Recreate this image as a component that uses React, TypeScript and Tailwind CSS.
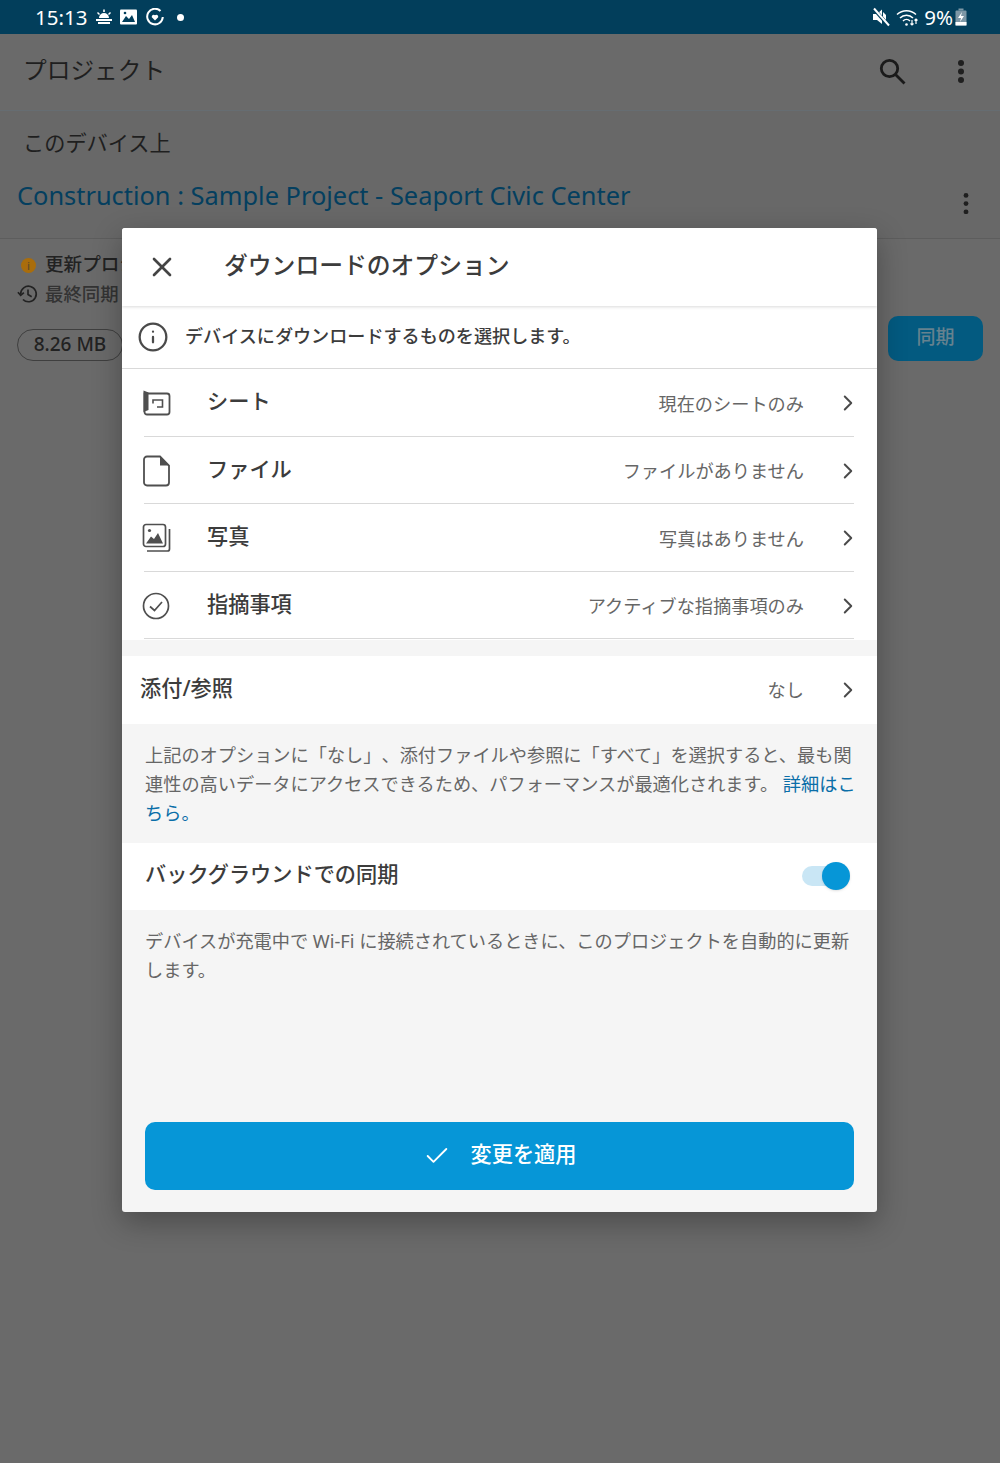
import { ChevronRight, Info, X, Check } from "lucide-react";
import type { ReactNode } from "react";

const font = { fontFamily: '"Noto Sans", "Noto Sans CJK JP", sans-serif' };

function SheetIcon() {
  return (
    <svg width="30" height="28" viewBox="0 0 30 28" fill="none" stroke="#4f4f4f" strokeWidth="1.8">
      <path d="M2.5 4.5 H25 a2.5 2.5 0 0 1 2.5 2.5 V23 a2.5 2.5 0 0 1 -2.5 2.5 H5 a2.5 2.5 0 0 1 -2.5 -2.5 Z" />
      <path d="M1.5 1.5 L6.5 3.5 V21 L1.5 23 Z" fill="#4f4f4f" stroke="none" />
      <path d="M11 14.5 V11 H20.5 V18 H15" strokeWidth="1.6" />
    </svg>
  );
}

function FileIcon() {
  return (
    <svg width="30" height="32" viewBox="0 0 30 32" fill="none" stroke="#4f4f4f" strokeWidth="1.8">
      <path d="M5 1.5 H18 L27 10.5 V27.5 a3 3 0 0 1 -3 3 H5 a3 3 0 0 1 -3 -3 V4.5 a3 3 0 0 1 3 -3 Z" />
      <path d="M18 1.5 L27 10.5 H18 Z" fill="#4f4f4f" stroke="none" />
    </svg>
  );
}

function PhotoIcon() {
  return (
    <svg width="30" height="30" viewBox="0 0 30 30" fill="none" stroke="#4f4f4f" strokeWidth="1.7">
      <rect x="1.5" y="1.5" width="22" height="22" rx="2.5" />
      <path d="M27.5 6 V26 a2 2 0 0 1 -2 2 H5" />
      <circle cx="7.5" cy="7.5" r="1.6" fill="#4f4f4f" stroke="none" />
      <path d="M4 20.5 L9 13.5 L12 16 L16 10 L21 20.5 Z" fill="#4f4f4f" stroke="none" />
    </svg>
  );
}

function IssueIcon() {
  return (
    <svg width="28" height="28" viewBox="0 0 28 28" fill="none" stroke="#4f4f4f" strokeWidth="1.7">
      <circle cx="14" cy="14" r="12.5" />
      <path d="M8 14.5 L12.5 18.5 L20 10" />
    </svg>
  );
}

function Dots({ r, gap }: { r: number; gap: number }) {
  return (
    <svg width="12" height={gap * 2 + r * 2} viewBox={`0 0 12 ${gap * 2 + r * 2}`} fill="#1f1f1f">
      <circle cx="6" cy={r} r={r} />
      <circle cx="6" cy={r + gap} r={r} />
      <circle cx="6" cy={r + gap * 2} r={r} />
    </svg>
  );
}

function Row({ icon, label, value }: { icon: ReactNode; label: string; value: string }) {
  return (
    <div className="h-[67.5px] flex items-center pt-[2px] ml-[22px] mr-[23px] border-b border-[#d9d9d9]">
      <div className="w-[65px] flex items-center -ml-[2px]">{icon}</div>
      <div className="text-[21.2px] font-medium text-[#3c3c3c] -mt-[4px] flex-1">{label}</div>
      <div className="text-[18.2px] text-[#666666] mr-[31px] mt-[2px]">{value}</div>
      <ChevronRight size={26} strokeWidth={1.8} className="text-[#4a4a4a] -mr-[7px]" />
    </div>
  );
}

export default function App() {
  return (
    <div className="relative h-[1463px] w-full overflow-hidden bg-[#6a6a6a]" style={font}>
      {/* status bar */}
      <div className="h-[34px] bg-[#023e5b] flex items-center justify-between pl-[35px] pr-[33px] text-white">
        <div className="flex items-center">
          <span className="text-[20.5px] leading-none">15:13</span>
          <svg className="ml-[8px]" width="18" height="17" viewBox="0 0 18 17" fill="#fff">
            <path d="M4 9 a5 5 0 0 1 10 0 Z M1 10 H17 V12 H1 Z M3 13 H15 V15 H3 Z M8.2 0.5 H9.8 V3 H8.2 Z M2 4 L3 3 L5 5 L4 6 Z M16 4 L15 3 L13 5 L14 6 Z" />
          </svg>
          <svg className="ml-[7px]" width="18" height="16" viewBox="0 0 18 16">
            <rect width="17" height="15" y="0.5" rx="1" fill="#fff" />
            <path d="M2 13 L6 7 L9 10 L12 6 L15 13 Z" fill="#023e5b" />
            <circle cx="5" cy="4" r="1.3" fill="#023e5b" />
          </svg>
          <svg className="ml-[8px]" width="18" height="18" viewBox="0 0 18 18" fill="none" stroke="#fff" strokeWidth="2">
            <path d="M14.5 3 A7.8 7.8 0 1 0 16.8 9" />
            <path d="M9 12.5 L5.8 9.2 a2 2 0 0 1 3.2 -2 a2 2 0 0 1 3.2 2 Z" fill="#fff" stroke="none" />
          </svg>
          <span className="ml-[13px] w-[7px] h-[7px] rounded-full bg-white" />
        </div>
        <div className="flex items-center">
          <svg width="18" height="20" viewBox="0 0 18 20" fill="#fff">
            <path d="M1 7 H5 L10 2.5 V17 L5 13 H1 Z" />
            <path d="M11 5 L14 8 V15 L11 12 Z" />
            <path d="M1.5 1.5 L16.5 18.5" stroke="#023e5b" strokeWidth="3.5" />
            <path d="M2 1.5 L17 18.5" stroke="#fff" strokeWidth="2" />
          </svg>
          <svg className="ml-[6px]" width="23" height="19" viewBox="0 0 23 19" fill="none" stroke="#fff" strokeWidth="1.5">
            <path d="M1 6.5 A14 14 0 0 1 20 6.5 M4 10 A9 9 0 0 1 17 10 M7 13 A5 5 0 0 1 14 13" />
            <circle cx="10.5" cy="16.5" r="1.3" fill="#fff" stroke="none" />
            <path d="M16 12 V17 M14.5 15.5 L16 17 L17.5 15.5 M20 16 V11 M18.5 12.5 L20 11 L21.5 12.5" strokeWidth="1.2" />
          </svg>
          <span className="ml-[5px] text-[20.5px] leading-none">9%</span>
          <svg className="ml-[2px]" width="12" height="18" viewBox="0 0 12 18">
            <rect x="0.5" y="2.5" width="11" height="15" rx="1" fill="#7d97a6" />
            <rect x="3.5" y="0.5" width="5" height="2" fill="#7d97a6" />
            <rect x="0.5" y="14" width="11" height="3.5" fill="#fff" />
            <path d="M7 4 L3 10 H6 L5 14 L9 8 H6 Z" fill="#fff" />
          </svg>
        </div>
      </div>

      {/* dimmed page behind the dialog */}
      <div className="h-[77px] flex items-center justify-between pl-[24px] pr-[33px] border-b border-[#666d72]">
        <div className="text-[23.7px] text-[#1f1f1f] -mt-[2px] -ml-[1px]">プロジェクト</div>
        <div className="flex items-center gap-[48px] -mt-[1px]">
          <svg width="28" height="28" viewBox="0 0 28 28" fill="none" stroke="#1a1a1a" strokeWidth="2.8">
            <circle cx="10.5" cy="10.5" r="8.2" />
            <path d="M16.5 16.5 L25.5 25.5" />
          </svg>
          <Dots r={3} gap={8.5} />
        </div>
      </div>
      <div className="h-[128px] border-b border-[#5d5d5d] bg-[#686868]">
        <div className="pl-[23px] pt-[14px] text-[21.2px] leading-[36px] text-[#1f1f1f]">このデバイス上</div>
        <div className="flex items-center justify-between pl-[17px] pr-[28px] mt-[14px]">
          <div className="text-[25.4px] leading-[36px] text-[#043f5f]">Construction : Sample Project - Seaport Civic Center</div>
          <div className="mt-[18px] flex"><Dots r={2.4} gap={8.2} /></div>
        </div>
      </div>
      <div className="flex justify-between pl-[17px] pr-[17px]">
        <div>
          <div className="flex items-center h-[30px] mt-[10px] w-[105px] overflow-hidden whitespace-nowrap text-[18.6px] font-medium text-[#222222]">
            <span className="ml-[4px] shrink-0 w-[15px] h-[15px] rounded-full bg-[#a96d0c] text-[11px] leading-[15px] text-center text-[#5e4a2a] mt-[3px]">i</span>
            <span className="ml-[9px]">更新プロジェクト</span>
          </div>
          <div className="flex items-center h-[30px] text-[18.4px] font-medium text-[#333333]">
            <svg width="22" height="22" viewBox="0 0 24 24" fill="none" stroke="#222222" strokeWidth="1.8">
              <path d="M4 12 a8.5 8.5 0 1 1 2.5 6" />
              <path d="M1 10 L4 13.5 L7.5 10.5" />
              <path d="M12 7 V12.5 L16 15" />
            </svg>
            <span className="ml-[6px]">最終同期</span>
          </div>
          <div className="mt-[20px] w-[106px] h-[32px] rounded-full border border-[#3f3f3f] text-[19px] leading-[29px] font-medium text-center text-[#222222]">8.26 MB</div>
        </div>
        <div className="mt-[77px] w-[95px] h-[45px] rounded-[10px] bg-[#035a80] text-[19px] font-medium leading-[43px] text-center text-[#66828f]">同期</div>
      </div>

      {/* dialog */}
      <div className="absolute left-[122px] top-[228px] w-[755px] h-[984px] rounded-[3px] bg-[#f5f5f5] flex flex-col shadow-[0_10px_30px_rgba(0,0,0,0.3)] overflow-hidden">
        <div className="relative z-10 h-[78px] bg-white flex items-center shadow-[0_1px_3px_rgba(0,0,0,0.15)]">
          <X size={32} strokeWidth={2} className="ml-[24px] text-[#444444]" />
          <div className="ml-[46px] text-[23.8px] font-medium text-[#3c3c3c] -mt-[3px]">ダウンロードのオプション</div>
        </div>
        <div className="h-[63px] bg-white flex items-center border-b border-[#d9d9d9]">
          <Info size={32} strokeWidth={1.7} className="ml-[15px] text-[#4a4a4a]" />
          <div className="ml-[16px] text-[18.1px] font-medium text-[#3c3c3c]">デバイスにダウンロードするものを選択します。</div>
        </div>
        <div className="bg-white pb-[1px]">
          <Row icon={<SheetIcon />} label="シート" value="現在のシートのみ" />
          <Row icon={<FileIcon />} label="ファイル" value="ファイルがありません" />
          <Row icon={<PhotoIcon />} label="写真" value="写真はありません" />
          <Row icon={<IssueIcon />} label="指摘事項" value="アクティブな指摘事項のみ" />
        </div>
        <div className="mt-[16px] h-[68px] bg-white flex items-center pl-[18px] pr-[16px]">
          <div className="flex-1 text-[21.2px] font-medium text-[#3c3c3c] -mt-[4px]">添付/参照</div>
          <div className="text-[18.2px] text-[#666666] mr-[31px] mt-[2px]">なし</div>
          <ChevronRight size={26} strokeWidth={1.8} className="text-[#4a4a4a]" />
        </div>
        <div className="h-[119px] pl-[23px] pr-[20px] pt-[17px] text-[18.2px] leading-[29px] text-[#666666] [text-spacing-trim:space-all]">
          上記のオプションに「なし」、添付ファイルや参照に「すべて」を選択すると、最も関連性の高いデータにアクセスできるため、パフォーマンスが最適化されます。 <span className="text-[#0a6ea8]">詳細はこちら。</span>
        </div>
        <div className="h-[67px] bg-white flex items-center justify-between pl-[23px] pr-[27px]">
          <div className="text-[21.2px] font-medium text-[#3c3c3c] -mt-[5px]">バックグラウンドでの同期</div>
          <div className="relative w-[48px] h-[20px] rounded-full bg-[#c9e6f5] -mt-[2px]">
            <span className="absolute right-0 -top-[4px] w-[28px] h-[28px] rounded-full bg-[#0696d7] shadow-sm" />
          </div>
        </div>
        <div className="pl-[23px] pr-[20px] pt-[17px] text-[18.2px] leading-[29px] text-[#666666] [text-spacing-trim:space-all]">
          デバイスが充電中で Wi-Fi に接続されているときに、このプロジェクトを自動的に更新します。
        </div>
        <div className="mt-auto mb-[22px] mx-[23px] h-[68px] rounded-[10px] bg-[#0696d7] flex items-center justify-center text-white">
          <Check size={28} strokeWidth={1.6} />
          <span className="ml-[20px] text-[21.2px] font-medium -mt-[5px]">変更を適用</span>
        </div>
      </div>
    </div>
  );
}
